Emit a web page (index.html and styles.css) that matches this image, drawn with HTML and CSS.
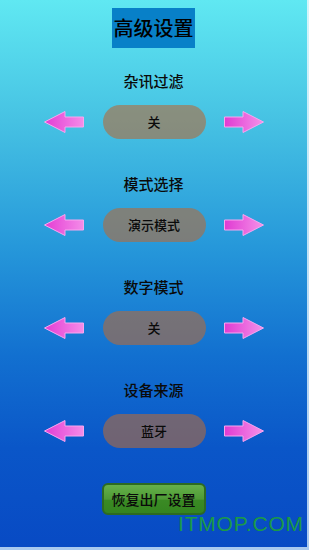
FILE: index.html
```html
<!DOCTYPE html>
<html lang="zh">
<head>
<meta charset="utf-8">
<title>高级设置</title>
<link rel="stylesheet" href="styles.css">
</head>
<body>
<div class="frame">
  <main class="screen">
    <h1 class="title">高级设置</h1>

    <section class="setting">
      <div class="label">杂讯过滤</div>
      <div class="row">
        <svg class="arrow" width="40" height="22" viewBox="0 0 40 22"><defs><linearGradient id="gl" x1="0" x2="1" y1="0" y2="0"><stop offset="0" stop-color="#e43cd4"/><stop offset="1" stop-color="#f48ce8"/></linearGradient></defs><polygon points="0.5,11 21,0.5 21,6 39.5,6 39.5,16 21,16 21,21.5" fill="url(#gl)" stroke="#f7a6ee" stroke-width="1"/></svg>
        <div class="pill">关</div>
        <svg class="arrow" width="40" height="22" viewBox="0 0 40 22"><defs><linearGradient id="gr" x1="0" x2="1" y1="0" y2="0"><stop offset="0" stop-color="#e03ad2"/><stop offset="1" stop-color="#f592e9"/></linearGradient></defs><polygon points="39.5,11 19,0.5 19,6 0.5,6 0.5,16 19,16 19,21.5" fill="url(#gr)" stroke="#f7a6ee" stroke-width="1"/></svg>
      </div>
    </section>

    <section class="setting">
      <div class="label">模式选择</div>
      <div class="row">
        <svg class="arrow" width="40" height="22" viewBox="0 0 40 22"><polygon points="0.5,11 21,0.5 21,6 39.5,6 39.5,16 21,16 21,21.5" fill="url(#gl)" stroke="#f7a6ee" stroke-width="1"/></svg>
        <div class="pill">演示模式</div>
        <svg class="arrow" width="40" height="22" viewBox="0 0 40 22"><polygon points="39.5,11 19,0.5 19,6 0.5,6 0.5,16 19,16 19,21.5" fill="url(#gr)" stroke="#f7a6ee" stroke-width="1"/></svg>
      </div>
    </section>

    <section class="setting">
      <div class="label">数字模式</div>
      <div class="row">
        <svg class="arrow" width="40" height="22" viewBox="0 0 40 22"><polygon points="0.5,11 21,0.5 21,6 39.5,6 39.5,16 21,16 21,21.5" fill="url(#gl)" stroke="#f7a6ee" stroke-width="1"/></svg>
        <div class="pill">关</div>
        <svg class="arrow" width="40" height="22" viewBox="0 0 40 22"><polygon points="39.5,11 19,0.5 19,6 0.5,6 0.5,16 19,16 19,21.5" fill="url(#gr)" stroke="#f7a6ee" stroke-width="1"/></svg>
      </div>
    </section>

    <section class="setting">
      <div class="label">设备来源</div>
      <div class="row">
        <svg class="arrow" width="40" height="22" viewBox="0 0 40 22"><polygon points="0.5,11 21,0.5 21,6 39.5,6 39.5,16 21,16 21,21.5" fill="url(#gl)" stroke="#f7a6ee" stroke-width="1"/></svg>
        <div class="pill">蓝牙</div>
        <svg class="arrow" width="40" height="22" viewBox="0 0 40 22"><polygon points="39.5,11 19,0.5 19,6 0.5,6 0.5,16 19,16 19,21.5" fill="url(#gr)" stroke="#f7a6ee" stroke-width="1"/></svg>
      </div>
    </section>

    <button class="reset">恢复出厂设置</button>

    <div class="watermark">ITMOP.COM</div>
  </main>
</div>
</body>
</html>
```

FILE: styles.css
```css
* { box-sizing: border-box; }

html, body {
  margin: 0;
  padding: 0;
}

body {
  width: 309px;
  height: 550px;
  overflow: hidden;
  background: #c9e6f6;
  font-family: "Noto Sans CJK SC", "Noto Sans", sans-serif;
}

.frame {
  width: 309px;
  height: 550px;
  padding: 0 2px 3px 0;
  background: linear-gradient(#d4f6fb, #a9c9ef);
}

.screen {
  position: relative;
  width: 307px;
  height: 547px;
  display: flex;
  flex-direction: column;
  align-items: center;
  background: linear-gradient(#60e8f2 0%, #46c2e3 22%, #2698da 45%, #1270d0 65%, #0a56c8 82%, #084ac4 100%);
}

.title {
  margin: 8px 0 0;
  width: 83px;
  height: 40px;
  background: #0880c8;
  color: #000;
  font-size: 20px;
  font-weight: 500;
  line-height: 40px;
  text-align: center;
  letter-spacing: 0;
}

.setting {
  display: flex;
  flex-direction: column;
  align-items: center;
  margin-top: 23px;
}

.setting + .setting {
  margin-top: 35px;
}

.label {
  height: 20px;
  line-height: 20px;
  font-size: 15px;
  font-weight: 500;
  color: #0a0a0a;
}

.row {
  margin-top: 14px;
  display: flex;
  align-items: center;
  gap: 18px;
  height: 34px;
}

.arrow {
  display: block;
  flex: none;
}

.pill {
  width: 103px;
  height: 34px;
  border-radius: 17px;
  background: rgba(180, 107, 58, 0.6);
  color: #0a0a0a;
  font-size: 13px;
  font-weight: 500;
  line-height: 34px;
  text-align: center;
  margin-left: 1px;
}

.reset {
  margin-top: 35px;
  width: 104px;
  height: 32px;
  border: 2px solid #2d6a22;
  border-radius: 6px;
  background: linear-gradient(#66b04a 0%, #4e9a36 50%, #3a8a24 55%, #358420 100%);
  color: #0a0a0a;
  font-family: "Noto Sans CJK SC", "Noto Sans", sans-serif;
  font-size: 14px;
  font-weight: 500;
  line-height: 28px;
  padding: 0;
  text-align: center;
}

.watermark {
  position: absolute;
  left: 178px;
  top: 511px;
  font-family: "Liberation Sans", Arial, sans-serif;
  font-size: 21px;
  line-height: 26px;
  color: #1ea23a;
  opacity: 0.9;
  letter-spacing: 0.8px;
}
```
